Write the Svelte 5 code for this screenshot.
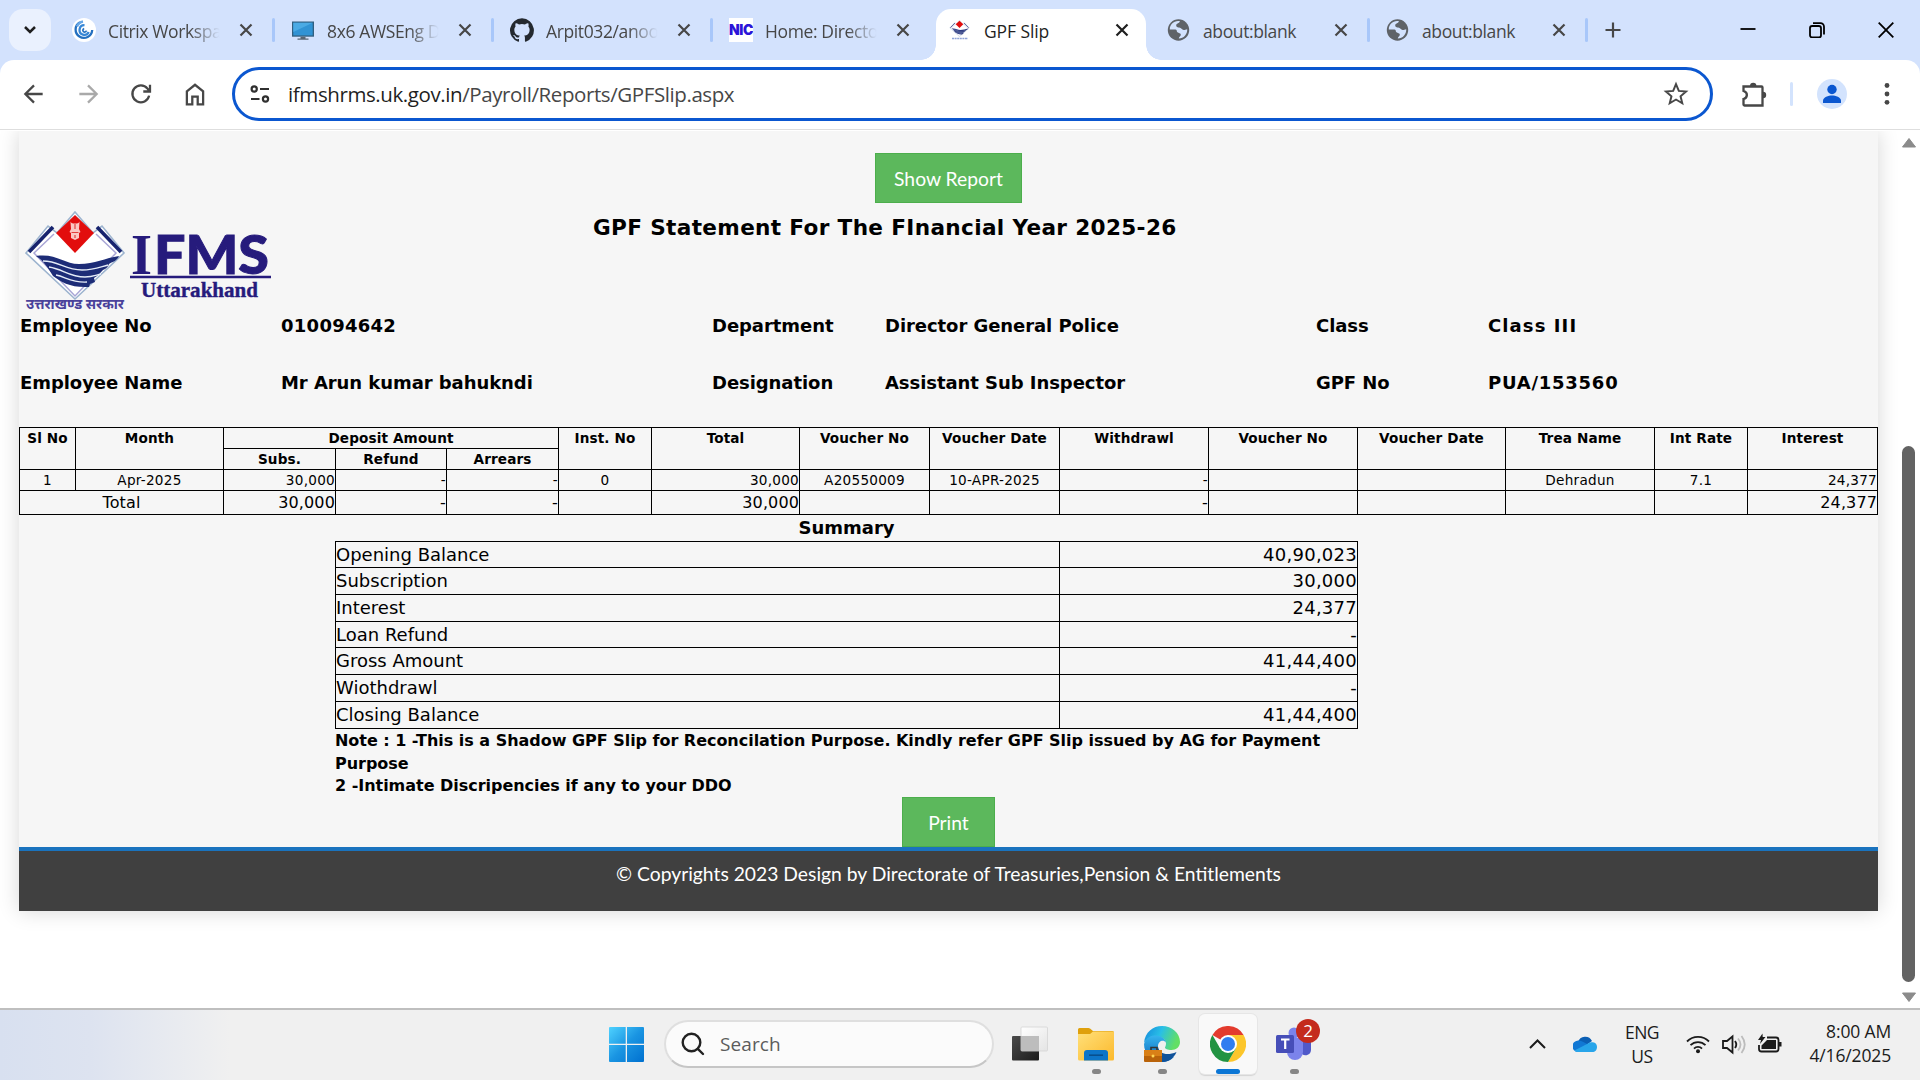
<script>
  const tabs = [
    { icon: 'citrix', title: 'Citrix Workspace' },
    { icon: 'monitor', title: '8x6 AWSEng Dev' },
    { icon: 'github', title: 'Arpit032/anoop' },
    { icon: 'nic', title: 'Home: Director' },
    { icon: 'gpf', title: 'GPF Slip', active: true },
    { icon: 'globe', title: 'about:blank' },
    { icon: 'globe', title: 'about:blank' },
  ];

  const employee = [
    ['Employee No', '010094642', 'Department', 'Director General Police', 'Class', 'Class III'],
    ['Employee Name', 'Mr Arun kumar bahukndi', 'Designation', 'Assistant Sub Inspector', 'GPF No', 'PUA/153560'],
  ];

  const columns = [56, 148, 112, 111, 112, 93, 148, 130, 130, 149, 149, 148, 149, 93, 130];
  const trailingHeads = ['Inst. No', 'Total', 'Voucher No', 'Voucher Date', 'Withdrawl', 'Voucher No', 'Voucher Date', 'Trea Name', 'Int Rate', 'Interest'];
  const entry = ['1', 'Apr-2025', '30,000', '-', '-', '0', '30,000', 'A20550009', '10-APR-2025', '-', '', '', 'Dehradun', '7.1', '24,377'];
  const totals = ['30,000', '-', '-', '', '30,000', '', '', '-', '', '', '', '', '24,377'];
  const numeric = new Set([2, 3, 4, 6, 9, 14]);

  const summary = [
    ['Opening Balance', '40,90,023'],
    ['Subscription', '30,000'],
    ['Interest', '24,377'],
    ['Loan Refund', '-'],
    ['Gross Amount', '41,44,400'],
    ['Wiothdrawl', '-'],
    ['Closing Balance', '41,44,400'],
  ];
</script>

{#snippet emblem()}
  <path d="M50 1 68 22 77 15 99 42 50 88 1 42 23 15 32 22Z" fill="#fff" stroke="#9db4cf" stroke-width="1.6" />
  <path d="M28 16 4 41M72 16 96 41" stroke="#17236e" stroke-width="3.6" fill="none" />
  <path d="M29 23 9 42 50 85 91 42 71 23" stroke="#a9a6d6" stroke-width="1.5" fill="none" />
  <path d="M11 45c20-3 28 8 43 8 16 0 26-6 40-8-2 5-7 6-10 8-1 3-3 5-6 6-3 3-5 6-9 8l1 4-5 2-1 3c-18 1-28-5-36-11-5-8-9-15-17-20Z" fill="#1d2c77" />
  <path d="M18 50c16 0 22 9 39 9 12 0 18-3 26-5M24 56c14 2 20 10 36 10 8 0 11-2 16-3M31 64c10 2 16 8 31 7" stroke="#e4ebf7" stroke-width="1.4" fill="none" />
  <path d="M50 4 69 22 50 42 31 22Z" fill="#e20d0d" />
{/snippet}

{#snippet favicon(name)}
  <svg class="favicon" viewBox="0 0 24 24">
    {#if name === 'citrix'}
      <circle cx="12" cy="12" r="12" fill="#fff" />
      <g fill="none" stroke-width="2.3">
        <path d="M8 4.2A8.3 8.3 0 1 0 20.2 12" stroke="#2470c0" />
        <path d="M11 3.5a8 8 0 0 0-6 5" stroke="#67a7e6" />
        <path d="M12.5 7.2a4.8 4.8 0 1 0 4.2 6.8" stroke="#3787d6" />
        <path d="M12.2 10.6a1.8 1.8 0 1 0 2.2 2.1" stroke="#2470c0" stroke-width="1.7" />
      </g>
    {:else if name === 'monitor'}
      <path d="M1 3.5h22v15.2H1z" fill="#315f7f" />
      <path d="M2.3 4.8h19.4v12.6H2.3z" fill="#3093d4" />
      <path d="M2.3 4.8h19.4L2.3 14z" fill="#4aaae4" />
      <path d="M9.5 18.7h5v1.8h3v1.2h-11v-1.2h3z" fill="#596773" />
    {:else if name === 'github'}
      <path fill="#24292f" d="M12 .3a12 12 0 0 0-3.8 23.38c.6.12.83-.26.83-.57L9 21.07c-3.34.72-4.04-1.61-4.04-1.61-.55-1.39-1.34-1.76-1.34-1.76-1.08-.74.09-.73.09-.73 1.2.09 1.83 1.24 1.83 1.24 1.08 1.83 2.81 1.3 3.5 1 .1-.78.42-1.31.76-1.61-2.67-.3-5.47-1.33-5.47-5.93 0-1.31.47-2.38 1.24-3.22-.14-.3-.54-1.52.1-3.18 0 0 1-.32 3.3 1.23a11.5 11.5 0 0 1 6 0c2.28-1.55 3.29-1.23 3.29-1.23.64 1.66.24 2.88.12 3.18a4.65 4.65 0 0 1 1.23 3.22c0 4.61-2.8 5.63-5.48 5.92.42.36.81 1.1.81 2.22l-.01 3.29c0 .31.2.69.82.57A12 12 0 0 0 12 .3" />
    {:else if name === 'nic'}
      <path d="M0 0h24v24H0z" fill="#fff" />
      <text class="nic" x="0" y="16.5" textLength="24" lengthAdjust="spacingAndGlyphs">NIC</text>
    {:else if name === 'gpf'}
      <g transform="translate(1.5 2) scale(.2 .19)">{@render emblem()}</g>
      <path d="M4 20.500h16" stroke="#8fa3d8" stroke-width="1.700" stroke-dasharray="2 .6" />
    {:else}
      <circle cx="11.5" cy="12" r="10.7" fill="#5f6368" />
      <path d="M13 3.2c-1 2.500-3.800 1.800-3.800 4.400 0 1.400 1.600 2 3 2 2.200 0 2.600 2.400 4.400 2.400 1.600 0 2-.8 3.600-.8.400 5-3.600 9.200-8.400 9.300.200-2 2-2 2-3.800 0-2.200-4-1.200-4-3.600 0-1.200-.8-1.600-2.400-1.600H2.800C2.600 6.400 7.600 1.900 13 3.200Z" fill="#d3e2fd" />
    {/if}
  </svg>
{/snippet}

<div class="screen">
  <header class="tabstrip">
    <button class="tab-search" aria-label="Search tabs">
      <svg width="16" height="16" viewBox="0 0 16 16"><path d="m3 5 5 5 5-5" fill="none" stroke="#1f1f1f" stroke-width="2.5" /></svg>
    </button>
    <div class="tabs">
      {#each tabs as tab, i}
        <div class="tab" class:active={tab.active} class:divided={!tab.active && !tabs[i + 1]?.active}>
          {@render favicon(tab.icon)}
          <span class="tab-title" class:faded={i < 4}>{tab.title}</span>
          <svg class="tab-close" viewBox="0 0 14 14"><path d="m1.500 1.500 11 11m0-11-11 11" /></svg>
        </div>
      {/each}
    </div>
    <svg class="new-tab" viewBox="0 0 16 16"><path d="M8 .5v15M.5 8h15" /></svg>
    <div class="window-controls">
      <svg viewBox="0 0 16 16"><path d="M.5 7h15" /></svg>
      <svg viewBox="0 0 16 16"><rect x="1" y="4" width="11" height="11.500" rx="2.200" /><path d="M4 1.200h7.500a3.500 3.500 0 0 1 3.500 3.500V12.500" /></svg>
      <svg viewBox="0 0 16 16"><path d="m.7.7 14.600 14.600m0-14.600L.7 15.300" /></svg>
    </div>
  </header>

  <nav class="toolbar">
    <div class="nav-buttons">
      <svg viewBox="0 0 24 24"><path d="M20 12H4.500M12 4l-8 8 8 8" /></svg>
      <svg class="disabled" viewBox="0 0 24 24"><path d="M4 12h15.500M12 4l8 8-8 8" /></svg>
      <svg viewBox="0 0 24 24"><path d="M19.500 13.500A7.800 7.800 0 1 1 18 7l2 2.500M20.300 3.500v6.200h-6.200" /></svg>
      <svg viewBox="0 0 24 24"><path d="M4.500 9.500 12 3.500l7.500 6v12H14.500v-7h-5v7H4.500Z" /></svg>
    </div>
    <div class="omnibox">
      <svg class="site-info" viewBox="0 0 20 20"><circle cx="4.200" cy="5" r="2.600" /><path d="M10 5h9M1 15h8.500" /><circle cx="15.500" cy="15" r="2.600" /></svg>
      <span class="url"><b>ifmshrms.uk.gov.in</b>/Payroll/Reports/GPFSlip.aspx</span>
      <svg class="star" viewBox="0 0 24 24"><path d="m12 2.900 2.600 6.200 6.700.6-5.100 4.400 1.600 6.500-5.800-3.500-5.800 3.500 1.600-6.500-5.100-4.400 6.700-.6Z" /></svg>
    </div>
    <svg class="extensions" viewBox="0 0 28 28"><path d="M4.500 6.500h18a1 1 0 0 1 1 1v18h-18a1 1 0 0 1-1-1v-5.500c4-1 5-6.500 0-8Z" /><path class="solid" d="M11 6a3.200 3.200 0 0 1 6.400 0ZM24 11.800a3.200 3.200 0 0 1 0 6.400Z" /></svg>
    <i class="bar-divider"></i>
    <svg class="avatar" viewBox="0 0 30 30"><circle cx="15" cy="15" r="15" fill="#d3e3fd" /><circle cx="15" cy="10.500" r="4.700" fill="#0b57d0" /><path d="M6 24v-2.200c0-3.600 5.500-5.300 9-5.300s9 1.700 9 5.300V24Z" fill="#0b57d0" /></svg>
    <svg class="menu" viewBox="0 0 6 24"><circle cx="3" cy="3.500" r="2.400" /><circle cx="3" cy="12" r="2.400" /><circle cx="3" cy="20.300" r="2.400" /></svg>
  </nav>

  <div class="viewport">
    <main class="page">
      <button class="action show">Show Report</button>
      <div class="report-head">
        <svg class="logo" viewBox="0 0 250 104">
          {@render emblem()}
          <path d="M45.500 10.500c1 2 2 2 4.500 2s3.500 0 4.500-2l-.5 7.500 1.500 3-1.500 1v5l-4 2-4-2v-5l-1.500-1 1.500-3Z" fill="#fbc7c2" />
          <path d="M50 13v5M46.500 21.500h7M50 24v3" stroke="#e2403c" stroke-width="1.200" />
          <text class="hindi" x="1" y="98" textLength="98" lengthAdjust="spacingAndGlyphs">उत्तराखण्ड सरकार</text>
          <text class="ifms-i" x="106" y="63" textLength="21" lengthAdjust="spacingAndGlyphs">I</text>
          <text class="ifms" x="129" y="63" textLength="115" lengthAdjust="spacingAndGlyphs">FMS</text>
          <path d="M105 66h141" stroke="#261b7c" stroke-width="2.500" />
          <text class="state" x="116" y="86" textLength="117" lengthAdjust="spacingAndGlyphs">Uttarakhand</text>
        </svg>
        <h1>GPF Statement For The FInancial Year 2025-26</h1>
      </div>

      <div class="employee">
        {#each employee as row}
          {#each row as text}<span>{text}</span>{/each}
        {/each}
      </div>

      <table class="ledger">
        <colgroup>
          {#each columns as width}<col style:width="{width}px" />{/each}
        </colgroup>
        <thead>
          <tr>
            <th rowspan="2">Sl No</th>
            <th rowspan="2">Month</th>
            <th colspan="3">Deposit Amount</th>
            {#each trailingHeads as head}<th rowspan="2">{head}</th>{/each}
          </tr>
          <tr><th>Subs.</th><th>Refund</th><th>Arrears</th></tr>
        </thead>
        <tbody>
          <tr>
            {#each entry as value, i}<td class:numeric={numeric.has(i)}>{value}</td>{/each}
          </tr>
          <tr class="totals">
            <td colspan="2">Total</td>
            {#each totals as value}<td class="numeric">{value}</td>{/each}
          </tr>
        </tbody>
      </table>

      <section class="summary">
        <h2>Summary</h2>
        <table>
          <tbody>
            {#each summary as [label, amount]}
              <tr><td class="label">{label}</td><td class="numeric">{amount}</td></tr>
            {/each}
          </tbody>
        </table>
        <p>Note : 1 -This is a Shadow GPF Slip for Reconcilation Purpose. Kindly refer GPF Slip issued by AG for Payment<br />Purpose<br />2 -Intimate Discripencies if any to your DDO</p>
      </section>
      <button class="action print">Print</button>
      <footer><span>© Copyrights 2023 Design by Directorate of Treasuries,Pension &amp; Entitlements</span></footer>
    </main>
    <div class="scrollbar">
      <svg viewBox="0 0 16 11"><path d="M8 1.500 14.500 10h-13Z" /></svg>
      <i></i>
      <svg viewBox="0 0 16 11"><path d="M8 9.500 14.500 1h-13Z" /></svg>
    </div>
  </div>

  <div class="taskbar">
    <svg class="start" viewBox="0 0 35 35">
      <defs><linearGradient id="win" x1="0" y1="0" x2="1" y2="1"><stop offset="0" stop-color="#4fd2ff" /><stop offset=".5" stop-color="#1a95e2" /><stop offset="1" stop-color="#0070cf" /></linearGradient></defs>
      <path d="M1 0h15.700v16.700H0V1a1 1 0 0 1 1-1ZM18 0h16a1 1 0 0 1 1 1v15.700H18ZM0 18h16.700v17H1a1 1 0 0 1-1-1ZM18 18h17v16a1 1 0 0 1-1 1H18Z" fill="url(#win)" />
    </svg>
    <div class="search">
      <svg viewBox="0 0 24 24"><circle cx="10.500" cy="10.500" r="8.800" /><path d="m16.800 16.800 5.200 5.200" /></svg>
      <span>Search</span>
    </div>
    <div class="apps">
      <div class="app">
        <svg viewBox="0 0 36 36">
          <defs>
            <linearGradient id="tv" x1="0" y1="0" x2="1" y2="1"><stop offset="0" stop-color="#4a4a4a" /><stop offset="1" stop-color="#1c1c1c" /></linearGradient>
            <linearGradient id="pane" x1="0" y1="0" x2="1" y2="1"><stop offset="0" stop-color="#fff" /><stop offset="1" stop-color="#e4e4e4" /></linearGradient>
          </defs>
          <rect x="0" y="10" width="27" height="24.500" rx="1" fill="url(#tv)" />
          <rect x="9" y="1" width="26.500" height="24" rx="1" fill="url(#pane)" stroke="#d4d4d4" stroke-width=".8" />
          <path d="M9 10h18v15H9z" fill="#bdbdbd" />
        </svg>
      </div>
      <div class="app running">
        <svg viewBox="0 0 36 36">
          <defs><linearGradient id="fold" x1="0" y1="0" x2="1" y2="1"><stop offset="0" stop-color="#ffe07a" /><stop offset="1" stop-color="#fcb92c" /></linearGradient></defs>
          <path d="M0 3.500A1.500 1.500 0 0 1 1.500 2h9l1.500.6L15 5h19.500A1.500 1.500 0 0 1 36 6.500V12H0Z" fill="#dfa00c" />
          <path d="M0 8h12l3-2.500h20a1 1 0 0 1 1 1V33a1.500 1.500 0 0 1-1.500 1.500h-33A1.500 1.500 0 0 1 0 33Z" fill="url(#fold)" />
          <path d="M6 34.500V27a3 3 0 0 1 3-3h18a3 3 0 0 1 3 3v7.500Z" fill="#0d75c8" />
          <path d="M11 29.200h14" stroke="#084f8e" stroke-width="1.600" />
        </svg>
      </div>
      <div class="app running">
        <svg viewBox="0 0 36 36">
          <defs>
            <linearGradient id="edgeTop" x1="0" y1="0" x2="1" y2=".3"><stop offset="0" stop-color="#1387dc" /><stop offset=".5" stop-color="#29bfe6" /><stop offset="1" stop-color="#62df65" /></linearGradient>
            <linearGradient id="edgeSide" x1="0" y1="0" x2="0" y2="1"><stop offset="0" stop-color="#36b4ee" /><stop offset="1" stop-color="#0a63b8" /></linearGradient>
          </defs>
          <path d="M0 17C1 6 9 0 18 0c10 0 18 7 18 16 0 5-4 8-8.500 8-4 0-6.500-1.200-6.500-2.500 0-.8 1-1.500 1-4 0-3.500-4-7-9-7C7 10.500 2 13.500 0 17Z" fill="url(#edgeTop)" />
          <path d="M0 18C2 11 7.500 9.500 12 9.500c6 0 9.500 4 9.800 7-1.800-3-7.800-2-7.800 4 0 6.500 6 13 16 10.500-3.500 3.500-7.500 5-12 5C8 36 0 28 0 18Z" fill="url(#edgeSide)" />
          <path d="M14 21c1 6 8 9.500 18.500 5C30 32 25 36 18 36c-4-3-5-10-4-15Z" fill="#10529a" />
          <path d="M7 24v-2.500h6V24" fill="none" stroke="#343434" stroke-width="1.600" />
          <path d="M0 24h18v12H1a1 1 0 0 1-1-1Z" fill="#b9630a" /><path d="M0 24h18v6H0z" fill="#d98017" />
          <circle cx="9" cy="30" r="1.500" fill="#ffd451" />
        </svg>
      </div>
      <div class="app running current">
        <svg viewBox="0 0 36 36">
          <path d="M18 18 2.400 9A18 18 0 0 1 33.600 9Z" fill="#e33b2e" />
          <path d="M18 18V9h15.600A18 18 0 0 1 18 36l7.800-13.500Z" fill="#fcc62b" />
          <path d="M2.400 9 10.200 22.500 18 18l7.800 4.500L18 36A18 18 0 0 1 2.400 9Z" fill="#229342" />
          <circle cx="18" cy="18" r="9" fill="#fff" /><circle cx="18" cy="18" r="7" fill="#2f7df0" />
        </svg>
      </div>
      <div class="app running">
        <svg viewBox="0 0 36 36">
          <circle cx="18" cy="7" r="5.500" fill="#7b83eb" />
          <path d="M25 12h8.500a1.500 1.500 0 0 1 1.500 1.500V24a5.500 5.500 0 0 1-9 4Z" fill="#5059c9" />
          <path d="M11 12h16v14a8 8 0 0 1-16 0Z" fill="#7b83eb" />
          <rect x="0" y="9" width="18" height="18" rx="1.500" fill="#464eb8" />
          <path d="M5 13.500h8.500M9.200 13.500v9.500" stroke="#fff" stroke-width="2.200" />
        </svg>
        <b class="badge">2</b>
      </div>
    </div>
    <div class="tray">
      <svg class="chevron" viewBox="0 0 17 10"><path d="m1 9 7.500-7.500L16 9" /></svg>
      <svg class="cloud" viewBox="0 0 24 16">
        <path d="M5 6a7.500 7.500 0 0 1 14-1l-7 5Z" fill="#0b5fb4" />
        <path d="M5.500 4.500C9 4.500 12 7 15 8.500L5 16A5.500 5.500 0 0 1 5.500 4.500Z" fill="#1178d4" />
        <path d="M15 7.500c2-2 9-2.500 9 3.500 0 3-2 5-4.500 5H5c-1.500 0-2.700-.5-3.600-1.500Z" fill="#28a5ea" />
      </svg>
      <span class="lang">ENG<br />US</span>
      <div class="status">
        <svg viewBox="0 0 24 24"><path d="M1 9.500a15.500 15.500 0 0 1 22 0M4.500 13.200a10.500 10.500 0 0 1 15 0M8 16.600a5.600 5.600 0 0 1 8 0" /><circle class="solid" cx="12" cy="19.200" r="2" /></svg>
        <svg viewBox="0 0 24 24"><path d="M1 9h4l5.500-4.500v16L5 16H1ZM13 9q2.500 3.500 0 7" /><path class="mute" d="M16 6.500q5 6 0 12M19.500 4q6.500 8.500 0 17" /></svg>
        <svg viewBox="0 0 24 24"><path d="M9 5.500h9a2.500 2.500 0 0 1 2.500 2.500v9a2.500 2.500 0 0 1-2.500 2.500H3.500A2.500 2.500 0 0 1 1 17v-4" /><path class="solid" d="M9 8h9v9H3.500v-3.500ZM21 10h2.500v4.500H21ZM4.500 1.500 0 8h3L2 12l5.500-7H4.700Z" /></svg>
      </div>
      <span class="clock">8:00 AM<br />4/16/2025</span>
    </div>
  </div>
</div>

<style>
  :global(body) { margin: 0; background: #fff; }
  * { box-sizing: border-box; }
  button { font: inherit; border: 0; padding: 0; }
  svg { display: block; flex: none; }

  .screen {
    width: 1920px; height: 1080px; overflow: hidden;
    display: flex; flex-direction: column;
    font-family: "Open Sans", "Noto Sans", sans-serif;
    background: #d3e2fd;
  }

  /* Tab strip */
  .tabstrip { height: 60px; display: flex; align-items: center; padding-left: 9px; }
  .tab-search {
    width: 42px; height: 42px; border-radius: 14px; background: #eaf1fe;
    display: grid; place-items: center;
  }
  .tabs { display: flex; margin-left: 5px; align-self: stretch; }
  .tab {
    position: relative; width: 219px; padding: 0 22px 0 16px;
    display: flex; align-items: center; color: #474747;
    font-size: 17.5px; letter-spacing: -.38px;
  }
  .tab:last-child { width: 218px; }
  .favicon { width: 24px; height: 24px; }
  .tab-title { margin-left: 12px; padding-top: 2px; width: 114px; overflow: hidden; white-space: nowrap; }
  .faded { mask-image: linear-gradient(90deg, #000 72%, transparent 98%); }
  .tab-close { width: 14px; height: 14px; margin-left: 17px; stroke: #474747; stroke-width: 2.2; fill: none; }
  .divided::after {
    content: ""; position: absolute; right: 0; top: 18px; width: 3px; height: 24px;
    border-radius: 2px; background: #a8c7fa;
  }
  .active { color: #1f1f1f; letter-spacing: -.1px; }
  .active .tab-close { stroke: #1f1f1f; }
  .active::before {
    content: ""; position: absolute; inset: 9px 5px 0 4px;
    background: #fff; border-radius: 15px 15px 0 0;
  }
  .active::after {
    content: ""; position: absolute; left: -11px; right: -10px; bottom: 0; height: 15px;
    background:
      radial-gradient(circle at 0 0, transparent 14.5px, #fff 15px) left / 15px 15px no-repeat,
      radial-gradient(circle at 100% 0, transparent 14.5px, #fff 15px) right / 15px 15px no-repeat;
  }
  .active > * { position: relative; }
  .new-tab { width: 16px; height: 16px; margin-left: 17px; stroke: #474747; stroke-width: 2.2; }
  .window-controls { display: flex; gap: 53px; margin: 0 26px 0 auto; }
  .window-controls svg { width: 16px; height: 16px; stroke: #000; stroke-width: 1.8; fill: none; }

  /* Toolbar */
  .toolbar {
    height: 70px; padding: 0 30px 1px 21px; display: flex; align-items: center;
    background: #fff; border-bottom: 1px solid #dedede; border-radius: 14px 14px 0 0;
  }
  .nav-buttons { display: flex; gap: 28px; }
  .nav-buttons svg { width: 26px; height: 26px; fill: none; stroke: #474747; stroke-width: 2.1; }
  .nav-buttons .disabled { stroke: #a9a9a9; }
  .nav-buttons svg + svg { margin-left: -.3px; }
  .omnibox {
    width: 1481px; height: 54px; margin-left: 24px; padding: 0 21px 0 15px;
    display: flex; align-items: center; border: 3px solid #0b57d0; border-radius: 27px;
  }
  .site-info { width: 20px; height: 20px; fill: none; stroke: #303030; stroke-width: 2.2; }
  .url { margin-left: 18px; font-size: 20.5px; color: #474747; letter-spacing: -.41px; }
  .url b { font-weight: 400; color: #1f1f1f; }
  .star { width: 26px; height: 26px; margin-left: auto; fill: none; stroke: #474747; stroke-width: 1.8; }
  .extensions { width: 28px; height: 28px; margin-left: 26px; fill: none; stroke: #474747; stroke-width: 2.3; }
  .extensions .solid { fill: #474747; stroke: none; }
  .bar-divider { width: 3px; height: 24px; margin-left: 23px; border-radius: 2px; background: #d3e3fd; }
  .avatar { width: 30px; height: 30px; margin-left: 24px; }
  .menu { width: 6px; height: 24px; margin-left: auto; fill: #474747; }

  /* Page */
  .viewport { height: 878px; display: flex; padding: 1px 0 0 19px; background: #fff; overflow: hidden; }
  .page {
    width: 1859px; height: 780px; display: flex; flex-direction: column; align-items: center;
    padding-top: 22px; background: #f6f6f6; color: #000;
    box-shadow: 0 0 20px rgba(0, 0, 0, .16); clip-path: inset(0 -30px -30px -30px);
    font-family: "DejaVu Sans", sans-serif;
  }
  .action {
    height: 50px; flex: none; color: #fff; background: #5cb85c; border: 1px solid #4cae4c;
    font-family: Lato, sans-serif; font-size: 19.3px;
  }
  .show { width: 147px; }
  .print { width: 93px; }
  .report-head { width: 100%; height: 112px; display: flex; padding: 8px 0 0 6px; }
  .logo { width: 250px; height: 104px; }
  .logo text, .nic { font-weight: 700; fill: #261b7c; }
  .logo .hindi { font-family: "Noto Sans Devanagari", "Noto Sans", sans-serif; font-size: 15px; fill: #4a429b; }
  .logo .ifms-i { font-family: "Liberation Serif", serif; font-size: 58px; }
  .logo .ifms { font-family: Lato, sans-serif; font-weight: 900; font-size: 54px; stroke: #261b7c; stroke-width: 1; }
  .logo .state { font-family: "Liberation Serif", serif; font-size: 22px; stroke: #261b7c; stroke-width: .4; }
  .nic { font-family: Inter, sans-serif; font-size: 14px; fill: #2b14d8; font-weight: 900; }
  h1 { margin: 4px 0 0 318px; font-size: 21.6px; line-height: 26px; letter-spacing: .34px; white-space: nowrap; }
  .employee {
    width: 100%; height: 112px; padding-left: 1px;
    display: grid; grid-template-columns: 261px 431px 173px 431px 172px 1fr; grid-template-rows: 57px 55px;
    font-size: 18px; line-height: 22px; font-weight: 700; letter-spacing: -.06px; white-space: nowrap;
  }
  .employee span:nth-child(2) { letter-spacing: .27px; }
  .employee span:nth-child(6) { letter-spacing: 1.1px; }
  .employee span:nth-child(12) { letter-spacing: .75px; }
  table { border-collapse: collapse; table-layout: fixed; }
  th, td { border: 1px solid #000; padding: 0; white-space: nowrap; }
  .ledger { width: 1859px; font-size: 13.6px; line-height: 19px; text-align: center; letter-spacing: .26px; }
  .ledger tr { height: 21px; }
  .ledger th { vertical-align: top; padding-top: 1px; letter-spacing: .12px; }
  .ledger .totals { height: 24px; font-size: 16px; letter-spacing: .12px; }
  .numeric, .ledger .numeric { text-align: right; }
  .summary { width: 100%; padding-left: 316px; font-size: 18px; }
  h2 { width: 1023px; height: 26px; margin: 0; font-size: 18px; line-height: 25px; text-align: center; }
  .summary table { width: 1023px; line-height: 22px; }
  .summary tr { height: 27px; }
  .summary tr:nth-child(3n + 1) { height: 26px; }
  .summary tr:last-child { height: 27px; }
  .summary .label { width: 724px; }
  .summary .numeric { letter-spacing: .26px; }
  .summary p { height: 68px; margin: 0; padding-top: 1px; font-size: 16px; line-height: 22.5px; font-weight: 700; letter-spacing: -.03px; white-space: nowrap; }
  footer {
    width: 100%; height: 64px; padding-top: 11px; text-align: center; color: #fff;
    background: #404040; border-top: 4px solid #1a73be;
    font-family: Lato, sans-serif; font-size: 19.3px; line-height: 24px;
  }
  .scrollbar { width: 23px; margin-left: 19px; display: flex; flex-direction: column; align-items: center; padding-top: 6px; }
  .scrollbar svg { width: 16px; height: 11px; fill: #8b8b8b; stroke: #8b8b8b; stroke-linejoin: round; }
  .scrollbar i { width: 13px; height: 536px; margin: 298px 0 10px; border-radius: 7px; background: #636363; }

  /* Taskbar */
  .taskbar {
    height: 72px; display: flex; align-items: center; color: #1b1b1b;
    border-top: 2px solid #bfbfbf; padding: 0 0 2px 609px;
    background: linear-gradient(90deg, #d8e0f0 0, #dde3f0 90px, #f0f0f0 230px);
  }
  .start { width: 35px; height: 35px; }
  .search {
    width: 330px; height: 48px; margin-left: 20px; padding-left: 16px; display: flex; align-items: center;
    background: #fbfbfb; border: 2px solid #dfdfdf; border-bottom-color: #c6c6c6; border-radius: 24px;
  }
  .search svg { width: 24px; height: 24px; margin-left: -1px; fill: none; stroke: #222; stroke-width: 2.4; stroke-linecap: round; }
  .search span { margin-left: 15px; font-size: 19px; color: #5c5c5c; letter-spacing: .1px; }
  .apps { display: flex; gap: 8px; margin-left: 7px; }
  .app { position: relative; width: 58px; height: 60px; display: grid; place-items: center; border-radius: 6px; }
  .app svg { width: 36px; height: 36px; }
  .running::after {
    content: ""; position: absolute; bottom: 0; left: 25px; width: 9px; height: 5px;
    border-radius: 3px; background: #868686;
  }
  .current { background: #f9f9f9; box-shadow: 0 0 0 1px #e6e6e6, 0 2px 1px #d4d4d4; }
  .current::after { left: 17px; width: 24px; background: #0b76d5; }
  .badge {
    position: absolute; left: 31px; top: 5px; width: 24px; height: 24px; border-radius: 50%;
    background: #c42b1c; color: #fff; font-size: 17px; line-height: 24px; font-weight: 400; text-align: center;
  }
  .tray { margin-left: auto; padding-right: 29px; display: flex; align-items: center; font-size: 17.5px; line-height: 24px; }
  .chevron { width: 17px; height: 10px; fill: none; stroke: #1b1b1b; stroke-width: 2; }
  .cloud { width: 24px; height: 16px; margin-left: 27px; }
  .lang { width: 40px; margin-left: 25px; text-align: center; letter-spacing: -.5px; }
  .status { display: flex; gap: 12px; margin-left: 24px; }
  .status svg { width: 24px; height: 24px; fill: none; stroke: #1b1b1b; stroke-width: 1.8; }
  .status .solid { fill: #1b1b1b; stroke: none; }
  .status .mute { stroke: #bcbcbc; }
  .clock { width: 109px; padding-bottom: 2px; text-align: right; letter-spacing: -.15px; }
</style>
